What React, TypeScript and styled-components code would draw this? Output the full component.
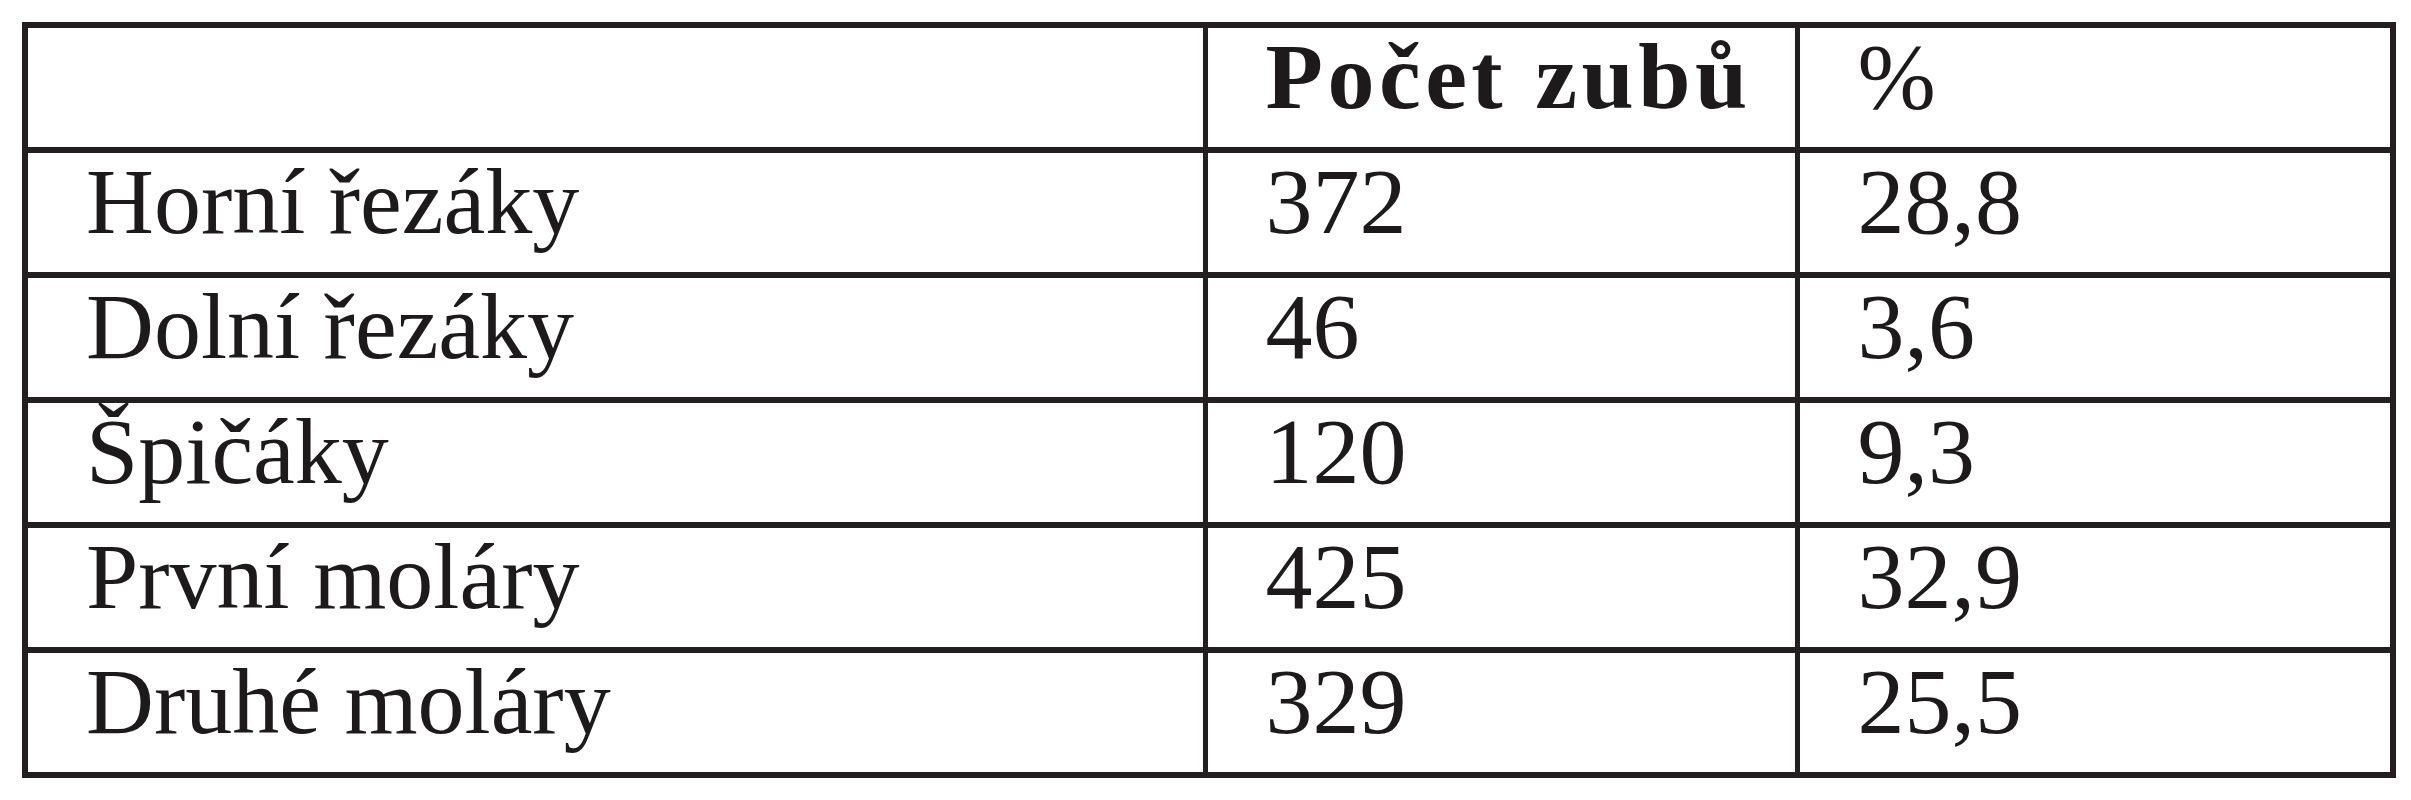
import React from "react";
import styled, { createGlobalStyle } from "styled-components";

const Global = createGlobalStyle`
  html, body { margin: 0; padding: 0; background: #ffffff; }
  body { font-family: "Liberation Serif", "Times New Roman", serif; color: #1c1a1b; }
`;

const Page = styled.div`
  padding: 22px 0 0 22px;
`;

const Table = styled.table`
  border-collapse: collapse;
  table-layout: fixed;
  width: 2368px;
  border: 6px solid #231f20;
`;

const Cell = styled.td<{ $bold?: boolean }>`
  border: 6px solid #231f20;
  border-left-width: 5px;
  border-right-width: 5px;
  height: 125px;
  box-sizing: border-box;
  padding: 0 0 24px 58px;
  vertical-align: middle;
  font-family: "Liberation Serif", "Times New Roman", serif;
  font-size: 94px;
  line-height: 80px;
  font-weight: ${(p) => (p.$bold ? 700 : 400)};
  letter-spacing: ${(p) => (p.$bold ? "4.5px" : "0")};
  white-space: nowrap;
  color: #1c1a1b;
`;

const rows: [string, string, string][] = [
  ["Horní řezáky", "372", "28,8"],
  ["Dolní řezáky", "46", "3,6"],
  ["Špičáky", "120", "9,3"],
  ["První moláry", "425", "32,9"],
  ["Druhé moláry", "329", "25,5"],
];

export default function App() {
  return (
    <>
      <Global />
      <Page>
        <Table>
          <colgroup>
            <col style={{ width: 1180 }} />
            <col style={{ width: 592 }} />
            <col style={{ width: 596 }} />
          </colgroup>
          <tbody>
            <tr>
              <Cell />
              <Cell $bold>Počet zubů</Cell>
              <Cell>%</Cell>
            </tr>
            {rows.map((r) => (
              <tr key={r[0]}>
                <Cell>{r[0]}</Cell>
                <Cell>{r[1]}</Cell>
                <Cell>{r[2]}</Cell>
              </tr>
            ))}
          </tbody>
        </Table>
      </Page>
    </>
  );
}
